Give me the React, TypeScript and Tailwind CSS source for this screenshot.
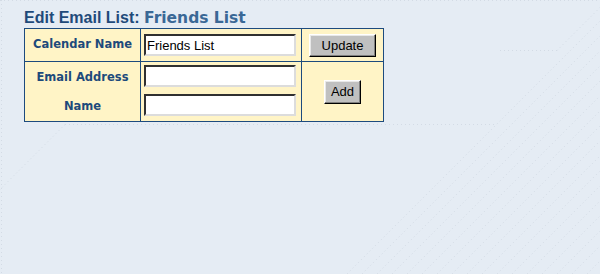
import React from "react";

function Inset({ value }: { value?: string }) {
  return (
    <input
      type="text"
      defaultValue={value}
      className="block w-[152px] h-[22px] bg-white border-2 border-solid border-t-[#303030] border-l-[#303030] border-b-[#dcdcdc] border-r-[#dcdcdc] px-px text-[13px] font-normal text-black outline-none"
      style={{ fontFamily: '"Liberation Sans", Arial, sans-serif' }}
    />
  );
}

function Btn({ label, w, h }: { label: string; w: string; h: string }) {
  return (
    <button
      type="button"
      className={`${w} ${h} bg-[#c0c0c0] border border-solid border-t-white border-l-white border-b-black border-r-black shadow-[inset_-1px_-1px_0_#808080,inset_1px_1px_0_#e8e8e8] text-[13px] font-normal text-black leading-none`}
      style={{ fontFamily: '"Liberation Sans", Arial, sans-serif' }}
    >
      {label}
    </button>
  );
}

export default function App() {
  const diag: number[] = [];
  for (let i = 0; i < 18; i++) diag.push(i);
  return (
    <div className="relative w-[600px] h-[274px] overflow-hidden bg-[#e5ecf4]">
      <svg className="absolute inset-0" width="600" height="274" aria-hidden="true">
        <g stroke="#d3dbe5" strokeWidth="1" strokeDasharray="1 3" fill="none">
          <line x1="0" y1="0.5" x2="600" y2="0.5" />
          <line x1="1.5" y1="0" x2="1.5" y2="274" />
          <line x1="65" y1="124.5" x2="497" y2="124.5" />
          <line x1="65" y1="124.5" x2="-85" y2="274.5" />
          <line x1="500" y1="50.5" x2="557" y2="50.5" />
          <line x1="557" y1="50.5" x2="607" y2="0.5" />
          {diag.map((i) => (
            <line key={i} x1={347 + i * 15} y1="274" x2={347 + i * 15 + 274} y2="0" />
          ))}
        </g>
      </svg>
      <div className="relative pl-[24px] pt-[8px]">
        <h1 className="h-[20px] leading-[18px] font-bold whitespace-nowrap">
          <span
            className="text-[16px] text-[#1f4a7a]"
            style={{ fontFamily: '"Liberation Sans", Arial, sans-serif' }}
          >
            Edit Email List:{" "}
          </span>
          <span
            className="text-[15.5px] text-[#3a6896]"
            style={{ fontFamily: '"DejaVu Sans", Verdana, sans-serif' }}
          >
            Friends List
          </span>
        </h1>
        <div
          className="grid w-[360px] grid-cols-[115px_160px_81px] grid-rows-[32px_59px] gap-px p-px bg-[#1d4b7e] text-[11.5px] font-bold text-[#1d4a7b]"
          style={{ fontFamily: '"DejaVu Sans", Verdana, sans-serif' }}
        >
          <div className="flex items-center justify-center bg-[#fff4c6]">Calendar Name</div>
          <div className="flex items-center pl-[3px] bg-[#fff4c6]">
            <Inset value="Friends List" />
          </div>
          <div className="flex items-center justify-center bg-[#fff4c6]">
            <Btn label="Update" w="w-[67px]" h="h-[23px]" />
          </div>
          <div className="flex flex-col items-center justify-center bg-[#fff4c6] leading-[29px]">
            <div>Email Address</div>
            <div>Name</div>
          </div>
          <div className="flex flex-col gap-[7px] pl-[3px] pt-[3px] bg-[#fff4c6]">
            <Inset />
            <Inset />
          </div>
          <div className="flex items-center justify-center bg-[#fff4c6]">
            <Btn label="Add" w="w-[37px]" h="h-[24px]" />
          </div>
        </div>
      </div>
    </div>
  );
}
